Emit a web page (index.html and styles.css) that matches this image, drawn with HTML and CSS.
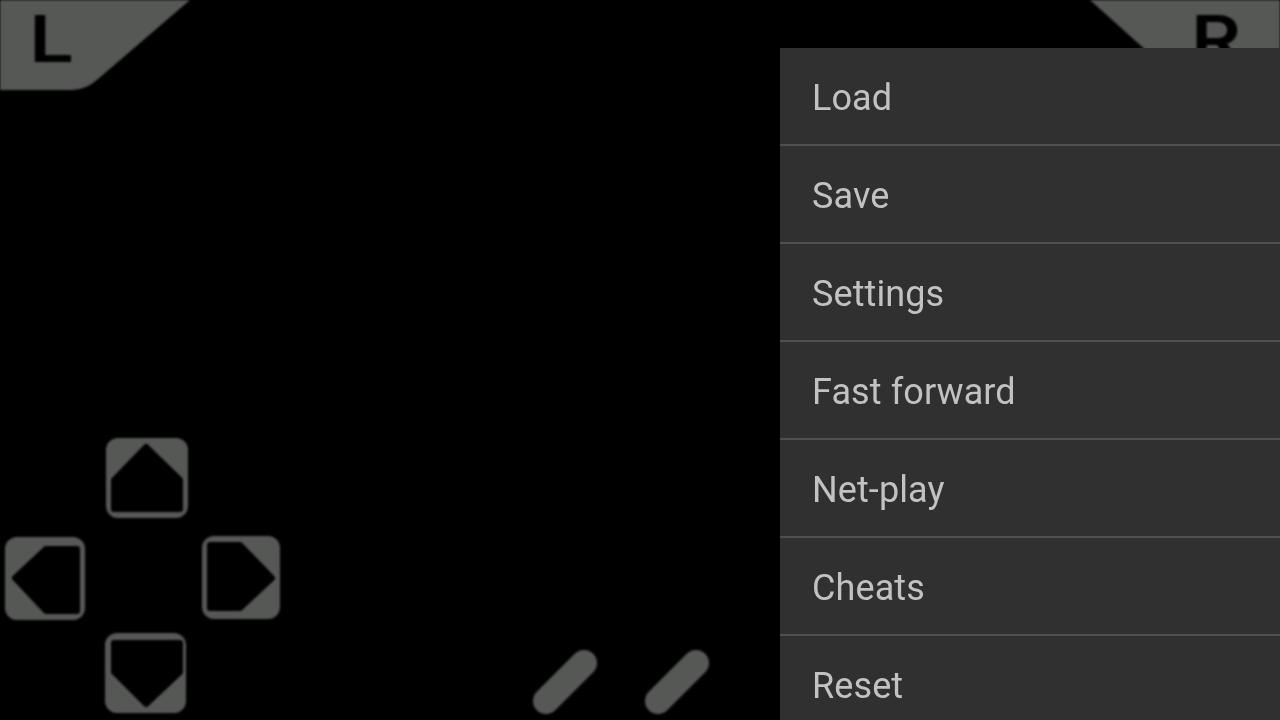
FILE: index.html
```html
<!DOCTYPE html>
<html lang="en">
<head>
    <meta charset="UTF-8">
    <meta name="viewport" content="width=device-width, initial-scale=1.0">
    <title>Emulator</title>
    <link rel="stylesheet" href="styles.css">
</head>
<body>
    <div class="screen">
        <svg class="pad" width="1280" height="720" viewBox="0 0 1280 720">
            <path class="btn" d="M0 0H190L98 79Q86 90 72 90H0Z"/>
            <text class="shoulder-label" transform="translate(29 62) scale(1.25 1)">L</text>

            <path class="btn" d="M1090 0H1280V90H1190Z"/>
            <text class="shoulder-label" transform="translate(1191 62) scale(1.2 1)">R</text>

            <rect class="btn" x="106" y="438" width="82" height="80" rx="12"/>
            <path class="hole" d="M146 447L180 480V509H114V480Z"/>

            <rect class="btn" x="5" y="537" width="80" height="83" rx="12"/>
            <path class="hole" d="M15 578L46 549H77V611H46Z"/>

            <rect class="btn" x="202" y="536" width="78" height="83" rx="12"/>
            <path class="hole" d="M272 578L240 545H210V608H240Z"/>

            <rect class="btn" x="105" y="633" width="81" height="80" rx="12"/>
            <path class="hole" d="M146 704L180 672V643H114V672Z"/>

            <line class="pill" x1="546" y1="701" x2="584" y2="663"/>
            <line class="pill" x1="658" y1="701" x2="696" y2="663"/>
        </svg>

        <ul class="menu">
            <li class="menu-item">Load</li>
            <li class="menu-item">Save</li>
            <li class="menu-item">Settings</li>
            <li class="menu-item">Fast forward</li>
            <li class="menu-item">Net-play</li>
            <li class="menu-item">Cheats</li>
            <li class="menu-item">Reset</li>
        </ul>
    </div>
</body>
</html>
```

FILE: styles.css
```css
body {
    margin: 0;
    background-color: #000;
    overflow: hidden;
}
.screen {
    position: relative;
    width: 1280px;
    height: 720px;
    overflow: hidden;
    background: #000;
}
.pad {
    position: absolute;
    top: 0;
    left: 0;
    filter: blur(1.1px);
}
.btn {
    fill: #565856;
}
.hole {
    fill: #000;
    stroke: #000;
    stroke-width: 6;
    stroke-linejoin: round;
}
.pill {
    stroke: #565856;
    stroke-width: 26;
    stroke-linecap: round;
}
.shoulder-label {
    font-family: Inter, "Open Sans", sans-serif;
    font-size: 64px;
    font-weight: 600;
    fill: #000;
}
.menu {
    position: absolute;
    top: 48px;
    left: 780px;
    width: 500px;
    margin: 0;
    padding: 0;
    list-style: none;
    background: #303030;
}
.menu-item {
    height: 96px;
    line-height: 100px;
    padding-left: 32px;
    border-bottom: 2px solid #505050;
    font-family: Roboto, sans-serif;
    font-size: 36px;
    letter-spacing: 0.1px;
    color: #c2c2c2;
    filter: blur(0.3px);
}
```
